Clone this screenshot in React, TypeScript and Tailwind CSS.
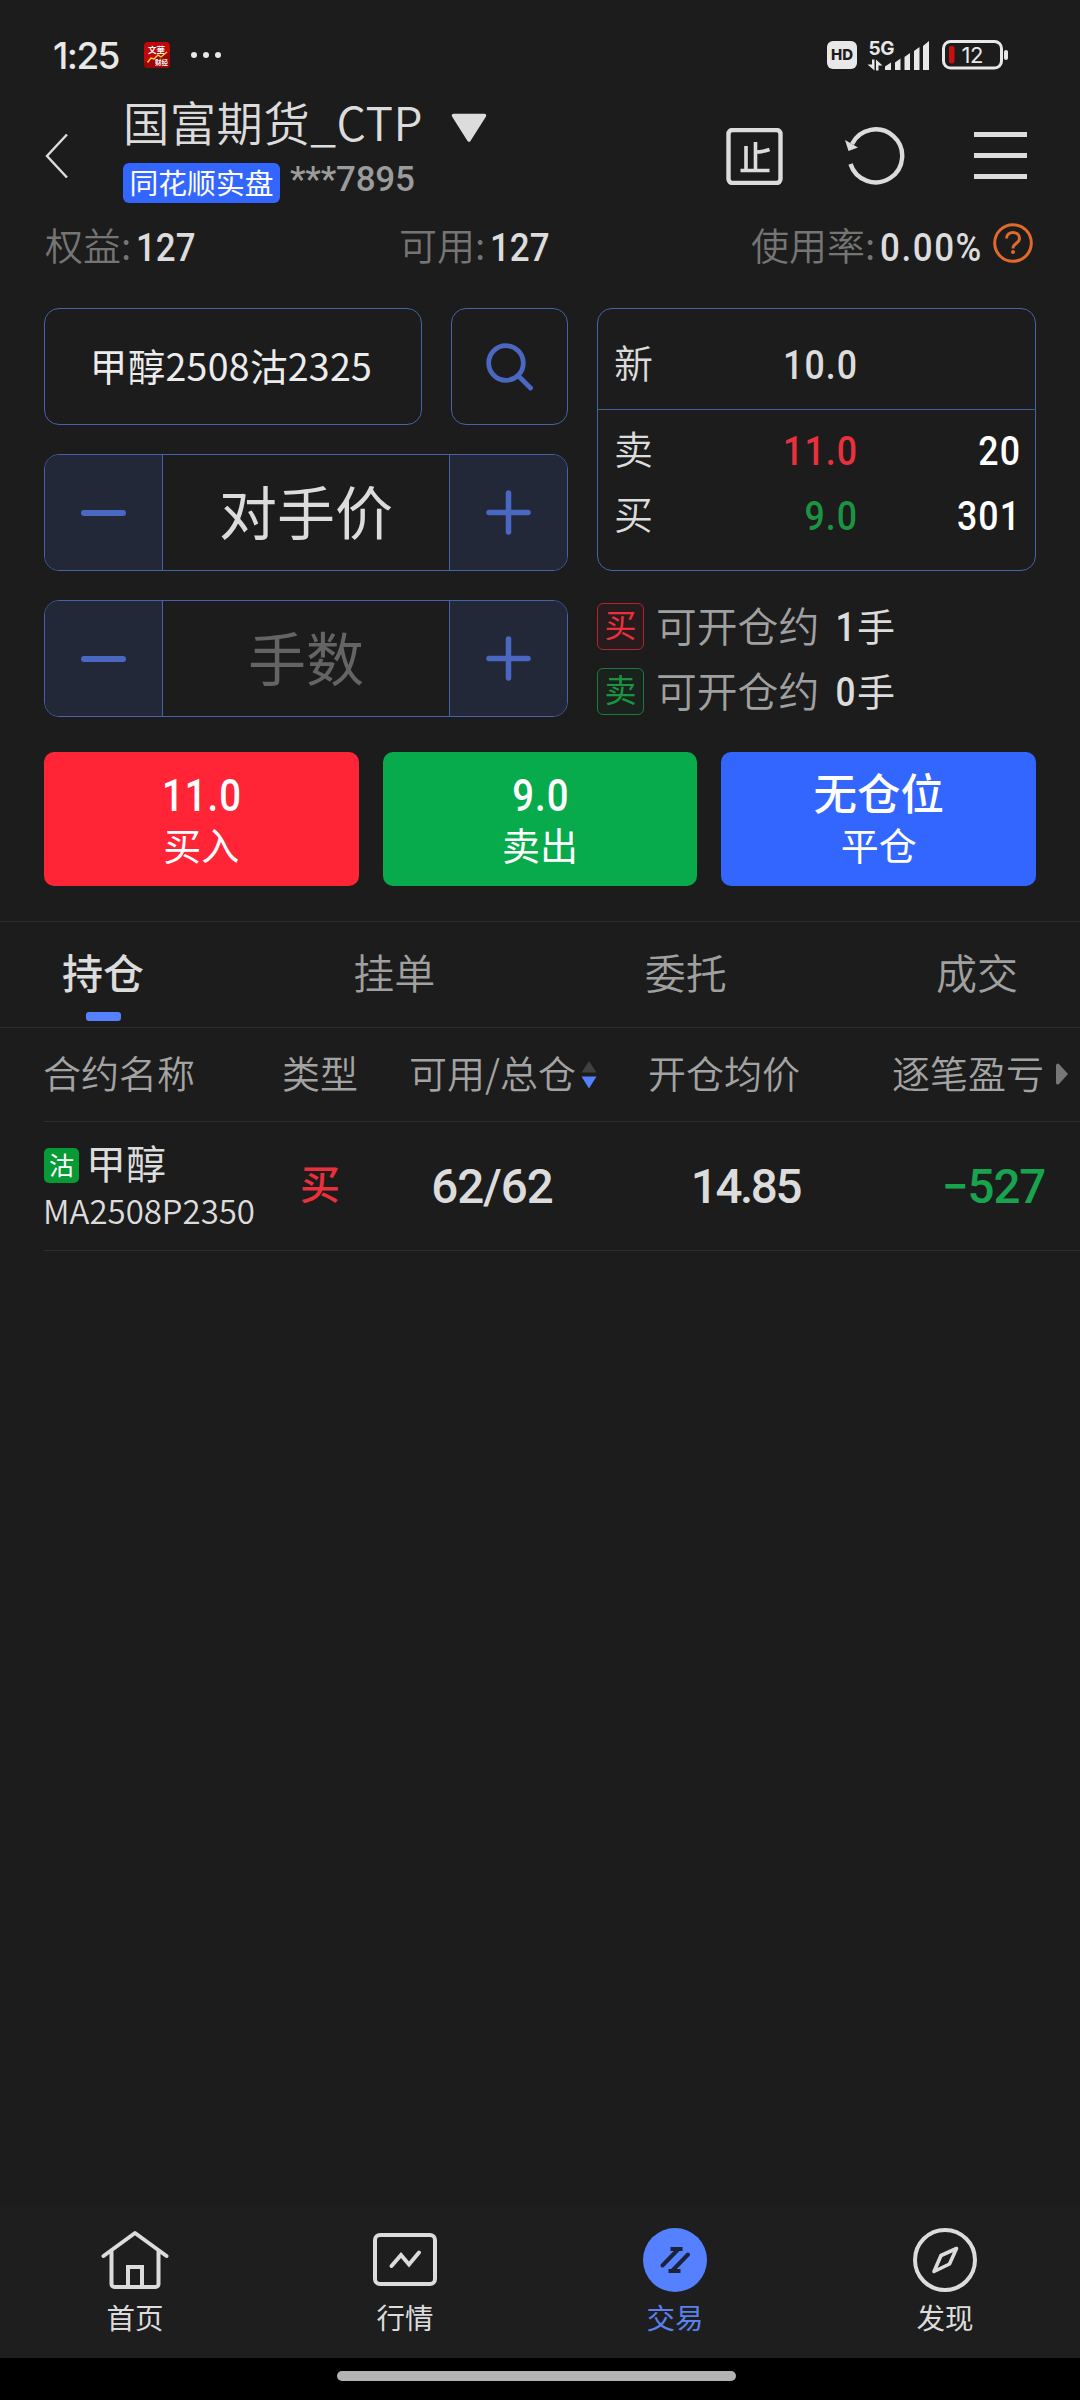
import type { ReactNode } from 'react';
import clsx from 'clsx';

const CJK = "font-['Noto_Sans_CJK_SC',sans-serif]";
const DIN = "font-['Roboto','Noto_Sans_CJK_SC',sans-serif] font-medium";

const tabs = ['持仓', '挂单', '委托', '成交'];

function StatusBar() {
  return (
    <div className="flex h-[98px] items-center pt-3 pr-[71px] pl-[53px] text-[#e8e8e8]">
      <span className="w-[91px] font-['Inter',sans-serif] text-[37px] leading-none font-medium tracking-[-1.600px]">1:25</span>
      <svg width="26" height="26" viewBox="0 0 26 26">
        <rect width="26" height="26" rx="4" fill="#c00808" />
        <path d="M0 20L26 10V22a4 4 0 0 1-4 4H4a4 4 0 0 1-4-4z" fill="#9c0606" />
        <text x="4" y="10.500" fontSize="8.500" fontWeight="700" fill="#fff" fontFamily="Noto Sans CJK SC">文華</text>
        <text x="11" y="22.500" fontSize="6.500" fontWeight="700" fill="#fff" fontFamily="Noto Sans CJK SC">财经</text>
        <path d="M3.500 20.500L7 16l3 1 4-4 3 2 6-5" fill="none" stroke="#ffd23c" strokeWidth="1.400" />
      </svg>
      <div className="ml-[21px] flex gap-1.5">
        <i className="size-1.5 rounded-full bg-[#e8e8e8]" />
        <i className="size-1.5 rounded-full bg-[#e8e8e8]" />
        <i className="size-1.5 rounded-full bg-[#e8e8e8]" />
      </div>
      <div className="ml-auto flex items-center">
        <span className="flex h-7 w-[30px] items-center justify-center rounded-[6px] bg-[#e8e8e8] font-['Inter',sans-serif] text-[15px] font-extrabold text-[#1c1c1c]">
          HD
        </span>
        <svg className="ml-[11px] overflow-visible" width="64" height="32" viewBox="0 0 64 32" fill="#e8e8e8">
          <text x="0.500" y="15.500" fontSize="19" fontWeight="700" fontFamily="Inter" textLength="26">5G</text>
          <path d="M4 20.500h2.500v11L-0.500 25.500h4.500zM8 31.500v-11l6.500 6h-4v5z" />
          <path d="M17 31v-3.500l6-4V31zM27 31v-7.500l5.500-4V31zM36.500 31V18l5.500-4v17zM46 31V12l5.500-4v23zM55 31V7l6-5v29z" />
        </svg>
        <svg className="ml-[10px]" width="67" height="30" viewBox="0 0 67 30">
          <rect x="1.500" y="1.500" width="58" height="26.500" rx="7" fill="none" stroke="#e8e8e8" strokeWidth="3" />
          <rect x="7" y="6" width="5.500" height="17.500" rx="2" fill="#c4110f" />
          <rect x="62" y="10" width="4" height="10" rx="2" fill="#e8e8e8" />
          <text x="30.500" y="23" fontSize="22" textAnchor="middle" fill="#e8e8e8" fontFamily="Inter" textLength="22">12</text>
        </svg>
      </div>
    </div>
  );
}

function Header() {
  return (
    <header className="flex h-[116px] text-[#dcdcdc]">
      <svg className="mt-9 ml-[45px]" width="23" height="44" viewBox="0 0 23 44" fill="none" stroke="#dcdcdc" strokeWidth="2.400">
        <path d="M22 0.500L2 22l20 21.500" />
      </svg>
      <div className="ml-[55px] w-[400px]">
        <div className="flex h-[52px] items-center">
          <span className="w-[300px] -translate-y-[3px] text-[46.300px] leading-none font-[350] tracking-[0.500px] whitespace-nowrap">
            国富期货_CTP
          </span>
          <svg className="mt-2 ml-[28px]" width="36" height="30" viewBox="0 0 36 30">
            <path d="M2.500 2.500h31L18 27z" fill="#dcdcdc" stroke="#dcdcdc" strokeWidth="3.500" strokeLinejoin="round" />
          </svg>
        </div>
        <div className="mt-[13px] flex">
          <span className="flex h-10 w-[157px] items-center justify-center rounded-[6px] bg-[#3366ff] text-[28.800px] leading-none text-white">
            <span className="-translate-y-px">同花顺实盘</span>
          </span>
          <span className={clsx(DIN, 'ml-[10px] text-[35px] leading-[34px] tracking-[-0.200px] text-[#9b9b9b]')}>***7895</span>
        </div>
      </div>
      <svg className="mt-[30px] ml-[203px]" width="57" height="57" viewBox="0 0 57 57">
        <rect x="2.500" y="2" width="52" height="53" rx="4" fill="none" stroke="#dcdcdc" strokeWidth="4.400" />
        <path d="M20 18v25M29.500 14v29M29.500 24c6 0 10-1 14-2.500M14.500 42.500h29" fill="none" stroke="#dcdcdc" strokeWidth="3.600" />
      </svg>
      <svg className="mt-[28px] ml-[60px]" width="62" height="60" viewBox="0 0 62 60">
        <path d="M7.500 38a26.500 26.500 0 1 0 1.500-20" fill="none" stroke="#dcdcdc" strokeWidth="4.400" />
        <path d="M2 14l13 7.500L5.500 25z" fill="#dcdcdc" />
      </svg>
      <div className="mt-[34px] ml-[69px] flex w-[53px] flex-col gap-4">
        <i className="h-[5px] bg-[#dcdcdc]" />
        <i className="h-[5px] bg-[#dcdcdc]" />
        <i className="h-[5px] bg-[#dcdcdc]" />
      </div>
    </header>
  );
}

function Stat({ label, value, tracking = 'tracking-normal' }: { label: string; value: string; tracking?: string }) {
  return (
    <div className="flex items-center">
      <span className="-translate-y-0.5 text-[38px] leading-none font-[350] text-[#757575]">{label}:</span>
      <span className={clsx(DIN, 'mt-1 ml-[5px] origin-left scale-x-[0.92] text-[38px] leading-none text-[#dcdcdc]', tracking)}>{value}</span>
    </div>
  );
}

function AccountRow() {
  return (
    <div className="flex h-16 items-center pl-[45px]">
      <div className="w-[354px]"><Stat label="权益" value="127" /></div>
      <div className="w-[352px]"><Stat label="可用" value="127" /></div>
      <div className="w-[242px]"><Stat label="使用率" value="0.00%" tracking="tracking-[1.700px]" /></div>
      <svg className="-mt-1.5" width="40" height="40" viewBox="0 0 40 40" fill="none" stroke="#e06a2a">
        <circle cx="20" cy="20" r="18.300" strokeWidth="3" />
        <path d="M13.500 15.500c0-8 13-8 13 0 0 5-6.500 4.500-6.500 10" strokeWidth="3" />
        <circle cx="20" cy="29" r="2" fill="#e06a2a" stroke="none" />
      </svg>
    </div>
  );
}

function Stepper({ text, muted }: { text: string; muted?: boolean }) {
  return (
    <div className="flex h-[117px] overflow-hidden rounded-[15px] border border-[#4663a8]">
      <button className="flex w-[117px] items-center justify-center bg-[#222838]">
        <i className="h-1.5 w-[45px] rounded-[3px] bg-[#4a68c2]" />
      </button>
      <div
        className={clsx(
          'flex flex-1 items-center justify-center border-x border-[#4663a8] text-[58px] leading-none',
          muted ? 'text-[#646464]' : 'text-[#dcdcdc]',
        )}
      >
        <span className="-translate-y-[3px]">{text}</span>
      </div>
      <button className="flex w-[117px] items-center justify-center bg-[#222838]">
        <svg width="45" height="45" viewBox="0 0 45 45" stroke="#4a68c2" strokeWidth="5.500" strokeLinecap="round">
          <path d="M22.500 3v39M3 22.500h39" />
        </svg>
      </button>
    </div>
  );
}

function QuoteRow({ label, price, volume, color }: { label: string; price: string; volume?: string; color: string }) {
  const num = clsx(DIN, 'origin-right scale-x-[0.87] text-right text-[41px] leading-none tracking-[1.200px]');
  return (
    <div className="flex h-[65px] items-center text-[#dcdcdc]">
      <span className="w-[78px] -translate-y-1 text-[39px] leading-none font-[350]">{label}</span>
      <span className={clsx(num, 'w-[166px]', color)}>{price}</span>
      <span className={clsx(num, 'flex-1 text-white')}>{volume}</span>
    </div>
  );
}

function OpenRow({ tag, count, tone }: { tag: string; count: string; tone: string }) {
  return (
    <div className="flex h-12 items-center">
      <span className={clsx('flex size-[47px] items-center justify-center rounded-[6px] border text-[32px] leading-none', tone)}>
        <span className="-translate-y-[3px]">{tag}</span>
      </span>
      <span className="ml-3 w-[177px] -translate-y-px text-[40.800px] leading-none font-[350] text-[#a0a0a0]">可开仓约</span>
      <span className={clsx(DIN, 'mt-1 w-5 origin-right scale-x-[0.88] text-right text-[40px] leading-none text-[#dcdcdc]')}>{count}</span>
      <span className="ml-1 -translate-y-px text-[38px] leading-none text-[#dcdcdc]">手</span>
    </div>
  );
}

function OrderPanel() {
  return (
    <section className="mt-[30px] flex gap-[29px] px-11">
      <div className="flex w-[524px] flex-col gap-[29px]">
        <div className="flex gap-[29px]">
          <div className="flex h-[117px] flex-1 items-center justify-center rounded-[15px] border border-[#4663a8] text-[37.500px] leading-none tracking-[0.300px] text-[#ececec]">
            <span className="-translate-x-0.5 -translate-y-0.5">甲醇2508沽2325</span>
          </div>
          <div className="flex size-[117px] items-center justify-center rounded-[15px] border border-[#4663a8]">
            <svg width="48" height="48" viewBox="0 0 48 48" fill="none" stroke="#4a68c2" strokeWidth="4.800" strokeLinecap="round">
              <circle cx="20" cy="20" r="17.300" />
              <path d="M33 33.500L44.500 45" />
            </svg>
          </div>
        </div>
        <Stepper text="对手价" />
        <Stepper text="手数" muted />
      </div>
      <div className="w-[439px]">
        <div className="h-[263px] rounded-[15px] border border-[#4663a8]">
          <div className="flex h-[101px] flex-col justify-center border-b border-[#44589a] pt-3 pr-3.5 pl-4">
            <QuoteRow label="新" price="10.0" color="text-[#dcdcdc]" />
          </div>
          <div className="pt-[9px] pr-3.5 pl-4">
            <QuoteRow label="卖" price="11.0" volume="20" color="text-[#ea303c]" />
            <QuoteRow label="买" price="9.0" volume="301" color="text-[#1a9440]" />
          </div>
        </div>
        <div className="mt-[31px] flex flex-col gap-[17px]">
          <OpenRow tag="买" count="1" tone="border-[#b02530] bg-[#271b1d] text-[#ea303c]" />
          <OpenRow tag="卖" count="0" tone="border-[#1c7a3c] bg-[#1b221d] text-[#1a9440]" />
        </div>
      </div>
    </section>
  );
}

function ActionButton({ top, label, className }: { top: ReactNode; label: string; className: string }) {
  return (
    <button className={clsx('flex h-[134px] flex-1 flex-col items-center rounded-[10px] pt-[19px] text-white', className)}>
      <span className="flex h-[46px] items-center">{top}</span>
      <span className="mt-[5px] text-[38px] leading-[44px]">{label}</span>
    </button>
  );
}

function Actions() {
  const num = clsx(DIN, 'translate-x-px translate-y-0.5 scale-x-[0.87] text-[44px] leading-none tracking-[1.200px]');
  return (
    <section className="mt-[35px] flex gap-6 px-11">
      <ActionButton top={<span className={num}>11.0</span>} label="买入" className="bg-[#ff2536]" />
      <ActionButton top={<span className={num}>9.0</span>} label="卖出" className="bg-[#08ab4b]" />
      <ActionButton
        top={<span className="-translate-y-0.5 text-[43.500px] leading-none font-medium">无仓位</span>}
        label="平仓"
        className="bg-[#3366ff]"
      />
    </section>
  );
}

function Tabs() {
  return (
    <nav className="mt-[35px] flex h-[107px] justify-between border-y border-[#2e2e2e] px-[62px]">
      {tabs.map((tab, i) => (
        <div key={tab} className="flex flex-col items-center pt-[26px]">
          <span className={clsx('text-[41px] leading-[46px]', i === 0 ? 'font-medium text-[#dcdcdc]' : 'font-[350] text-[#a0a0a0]')}>{tab}</span>
          {i === 0 && <i className="mt-[18px] h-[9px] w-[35px] rounded-[3px] bg-[#5580ff]" />}
        </div>
      ))}
    </nav>
  );
}

function Positions() {
  const cols = 'ml-11 grid grid-cols-[232px_88px_256px_180px_280px] items-center border-b border-[#2e2e2e]';
  const num = clsx(DIN, 'translate-y-0.5 text-[47.500px] leading-none');
  return (
    <section>
      <div className={clsx(cols, 'h-[94px] pb-[5px] text-[38px] leading-none font-[350] text-[#a3a3a3]')}>
        <span className="-translate-x-px">合约名称</span>
        <span className="text-center">类型</span>
        <span className="flex items-center pl-[45px]">
          可用/总仓
          <svg className="mt-[5px] ml-[5px]" width="16" height="28" viewBox="0 0 16 28">
            <path d="M8 0l7.500 11.500H0.500z" fill="#404040" />
            <path d="M8 27.500L0.500 15.500h15z" fill="#5580ff" />
          </svg>
        </span>
        <span className="text-right">开仓均价</span>
        <span className="flex items-center justify-end pr-3">
          逐笔盈亏
          <svg className="mt-1 ml-3" width="12" height="22" viewBox="0 0 12 22">
            <path d="M0 2a2 2 0 0 1 3-1l9 10-9 10a2 2 0 0 1-3-1z" fill="#777" />
          </svg>
        </span>
      </div>
      <div className={clsx(cols, 'h-[129px] text-[#dcdcdc]')}>
        <div>
          <div className="flex items-center">
            <span className="flex size-[35px] items-center justify-center rounded-[5px] bg-[#089a35] text-[25px] leading-none text-white">
              <span className="-translate-y-px">沽</span>
            </span>
            <span className="ml-[7px] -translate-y-[3px] text-[40px] leading-none">甲醇</span>
          </div>
          <div className="mt-2 -translate-x-px text-[33px] leading-[34px] font-[350]">MA2508P2350</div>
        </div>
        <span className="-translate-y-1 text-center text-[40px] leading-none font-medium text-[#ea303c]">买</span>
        <span className={clsx(num, 'text-center tracking-[-1px]')}>62/62</span>
        <span className={clsx(num, 'text-right tracking-[-2.400px]')}>14.85</span>
        <span className={clsx(num, 'pr-[35px] text-right tracking-[-1.200px] text-[#18a34e]')}>−527</span>
      </div>
    </section>
  );
}

function NavItem({ label, active, children }: { label: string; active?: boolean; children: ReactNode }) {
  return (
    <div className={clsx('flex flex-1 flex-col items-center text-[28.500px] leading-none', active ? 'text-[#5b80ee]' : 'text-[#dcdcdc]')}>
      <svg width="68" height="68" viewBox="0 0 68 68" fill="none" stroke="#dcdcdc" strokeWidth="4" strokeLinecap="round" strokeLinejoin="round">
        {children}
      </svg>
      <span className="mt-[9px]">{label}</span>
    </div>
  );
}

function BottomNav() {
  return (
    <footer className="mt-auto">
      <div className="flex h-[151px] bg-[#1e1e1e] pt-[19px]">
        <NavItem label="首页">
          <path d="M2.500 30L34 7l31.500 23M10.500 25v33a3 3 0 0 0 3 3h41a3 3 0 0 0 3-3V25" />
          <path d="M27 61V41h14v20" strokeLinejoin="miter" />
        </NavItem>
        <NavItem label="行情">
          <rect x="4" y="9" width="60" height="49" rx="5" />
          <path d="M20.500 40l9.500-11 8 9.500 10-12" strokeLinejoin="miter" />
        </NavItem>
        <NavItem label="交易" active>
          <circle cx="34" cy="34" r="32" fill="#5580ff" stroke="none" />
          <path d="M21.500 39.500L37 23.500M47 28.500L31.500 44.500" stroke="#1c2238" />
          <path d="M29.500 23h12M27.500 45h12" stroke="#1c2238" strokeLinecap="butt" />
        </NavItem>
        <NavItem label="发现">
          <circle cx="34" cy="34" r="30" />
          <path d="M45.500 22.500L30 29.500 23 45.500 38.500 38z" strokeWidth="3.600" />
        </NavItem>
      </div>
      <div className="flex h-[42px] justify-center bg-black pt-[13px] pr-[7px]">
        <i className="h-[10px] w-[399px] rounded-full bg-[#b3b3b3]" />
      </div>
    </footer>
  );
}

export default function App() {
  return (
    <div className={clsx(CJK, 'flex h-[2400px] w-[1080px] flex-col overflow-hidden bg-[#1c1c1c]')}>
      <StatusBar />
      <Header />
      <AccountRow />
      <OrderPanel />
      <Actions />
      <Tabs />
      <Positions />
      <BottomNav />
    </div>
  );
}
